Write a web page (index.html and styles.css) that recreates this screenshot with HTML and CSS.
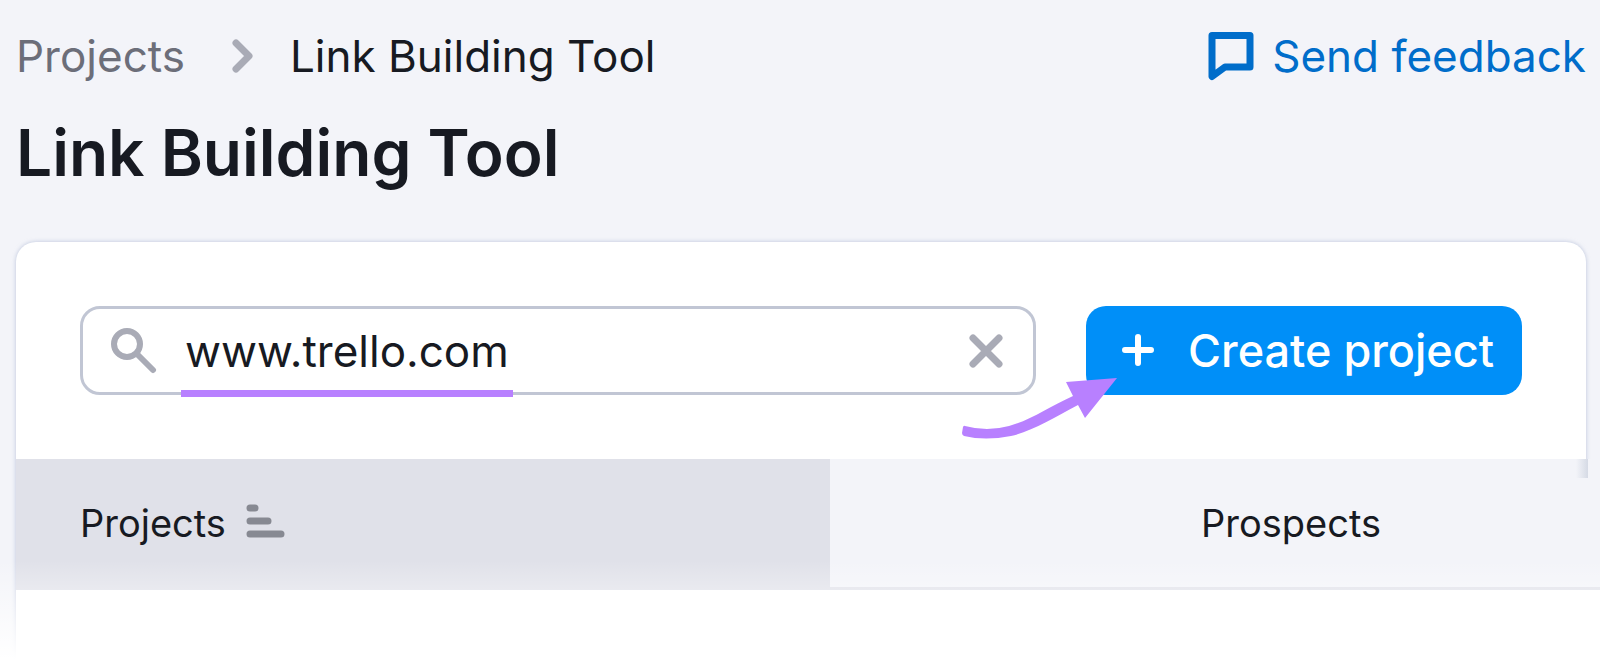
FILE: index.html
```html
<!DOCTYPE html>
<html lang="en">
<head>
    <meta charset="UTF-8">
    <meta name="viewport" content="width=device-width, initial-scale=1.0">
    <title>Link Building Tool</title>
    <link rel="stylesheet" href="styles.css">
</head>
<body>
    <header class="page-header">
        <div class="top-row">
            <nav class="breadcrumbs" aria-label="Breadcrumb">
                <a class="crumb" href="#">Projects</a>
                <svg class="crumb-arrow" width="22" height="34" viewBox="0 0 22 34" aria-hidden="true">
                    <path d="M4 4L17 17L4 30" fill="none" stroke="#a9abb6" stroke-width="7" stroke-linecap="round" stroke-linejoin="round"/>
                </svg>
                <span class="crumb-current">Link Building Tool</span>
            </nav>
            <a class="feedback" href="#">
                <svg width="46" height="50" viewBox="0 0 46 50" aria-hidden="true">
                    <path d="M4 4.500H42V36H17L4 45.500Z" fill="none" stroke="#006dca" stroke-width="7" stroke-linejoin="round"/>
                </svg>
                Send feedback
            </a>
        </div>
        <h1>Link Building Tool</h1>
    </header>

    <main class="card">
        <div class="toolbar">
            <div class="search">
                <svg class="search-icon" width="46" height="46" viewBox="0 0 46 46" aria-hidden="true">
                    <circle cx="16" cy="16" r="13" fill="none" stroke="#a9abb6" stroke-width="6"/>
                    <path d="M26 26L42 42" stroke="#a9abb6" stroke-width="6" stroke-linecap="round"/>
                </svg>
                <input class="search-input" type="text" value="www.trello.com" aria-label="Search projects">
                <button class="clear" type="button" aria-label="Clear">
                    <svg width="34" height="34" viewBox="0 0 34 34" aria-hidden="true">
                        <path d="M4 4L30 30M30 4L4 30" stroke="#a9abb6" stroke-width="7" stroke-linecap="round"/>
                    </svg>
                </button>
                <span class="underline"></span>
            </div>
            <button class="create" type="button">
                <svg width="32" height="34" viewBox="0 0 32 34" aria-hidden="true">
                    <path d="M16 3V29M3 16H29" stroke="#fff" stroke-width="6" stroke-linecap="round"/>
                </svg>
                Create project
            </button>
            <svg class="arrow" width="156" height="66" viewBox="0 0 156 66" aria-hidden="true">
                <path d="M4 50Q26 56 48 50C70 44 88 31 112 20L105 6L156 2L124 42L117 29C92 42 72 55 50 60Q24 65 3 60Q1 59 1 57L2 51Q3 49 4 50Z" fill="#b880ff"/>
            </svg>
        </div>
        <div class="table-scroll">
            <table class="projects">
                <thead>
                    <tr>
                        <th class="sorted">
                            <span class="th-label">Projects
                                <svg width="40" height="38" viewBox="0 0 40 38" aria-hidden="true">
                                    <path d="M4 4H9M4 17H22M4 30H35" stroke="#878992" stroke-width="7" stroke-linecap="round"/>
                                </svg>
                            </span>
                        </th>
                        <th class="prospects">Prospects</th>
                    </tr>
                </thead>
            </table>
        </div>
    </main>
</body>
</html>
```
FILE: styles.css
```css
* {
    box-sizing: border-box;
}
body {
    position: relative;
    margin: 0;
    min-height: 100vh;
    padding: 24px 0 0 16px;
    font-family: Inter, "Liberation Sans", sans-serif;
    font-size: 44px;
    line-height: 64px;
    color: #171a22;
    background: #f3f4f9;
    display: flex;
    flex-direction: column;
    overflow: hidden;
}
/* fade to white at the bottom of the page */
body::after {
    content: "";
    position: absolute;
    left: 0;
    right: 0;
    bottom: 0;
    height: 110px;
    background: linear-gradient(rgba(255, 255, 255, 0), #fff 90%);
    pointer-events: none;
}
a {
    text-decoration: none;
}
/* Header */
.page-header {
    padding-right: 14px;
}
.top-row {
    display: flex;
    justify-content: space-between;
    align-items: center;
}
.breadcrumbs {
    display: flex;
    align-items: center;
}
.crumb {
    color: #6c6e79;
}
.crumb-arrow {
    margin: 0 36px 0 47px;
}
.feedback {
    display: flex;
    align-items: center;
    gap: 18px;
    color: #006dca;
}
h1 {
    margin: 25px 0 49px;
    font-size: 64px;
    line-height: 80px;
    font-weight: 600;
}
/* Card */
.card {
    flex: 1;
    display: flex;
    flex-direction: column;
    margin-right: 14px;
    background: #fff;
    border-radius: 20px 20px 0 0;
    box-shadow: 0 0 4px rgba(150, 165, 200, 0.6);
}
.toolbar {
    position: relative;
    display: flex;
    gap: 50px;
    padding: 64px;
}
.search {
    position: relative;
    flex: 1;
    display: flex;
    align-items: center;
    height: 89px;
    padding: 0 30px 0 28px;
    border: 3px solid #c1c6d4;
    border-radius: 20px;
}
.search-input {
    flex: 1;
    min-width: 0;
    margin-left: 28px;
    padding: 0;
    border: none;
    outline: none;
    background: none;
    font: inherit;
    color: inherit;
}
.clear {
    display: flex;
    padding: 0;
    border: none;
    background: none;
    cursor: pointer;
}
.underline {
    position: absolute;
    left: 98px;
    bottom: -5px;
    width: 332px;
    height: 7px;
    background: #b880ff;
}
.create {
    display: flex;
    align-items: center;
    gap: 34px;
    height: 89px;
    padding: 0 28px 0 36px;
    border: none;
    border-radius: 20px;
    background: #008ff8;
    color: #fff;
    font: inherit;
    font-size: 45px;
    font-weight: 500;
    cursor: pointer;
}
.arrow {
    position: absolute;
    right: 469px;
    top: 134px;
}
/* Table */
.table-scroll {
    position: relative;
    flex: 1;
    margin-right: -14px;
    background: #fff;
    overflow: hidden;
}
/* edge shadow */
.table-scroll::after {
    content: "";
    position: absolute;
    top: 0;
    right: 12px;
    width: 12px;
    height: 19px;
    background: linear-gradient(to right, rgba(200, 208, 222, 0), #d5dae5);
}
.projects {
    width: calc(100% + 152px);
    table-layout: fixed;
    border-collapse: collapse;
}
.projects th {
    height: 129px;
    padding: 0;
    border-bottom: 3px solid #e0e1e9;
    background: #f3f4f9;
    font-size: 38px;
    line-height: 48px;
    font-weight: 400;
}
.projects .sorted {
    width: 814px;
    padding-left: 64px;
    background: #e0e1e9;
    text-align: left;
}
.th-label {
    display: flex;
    align-items: center;
    gap: 20px;
}
```
